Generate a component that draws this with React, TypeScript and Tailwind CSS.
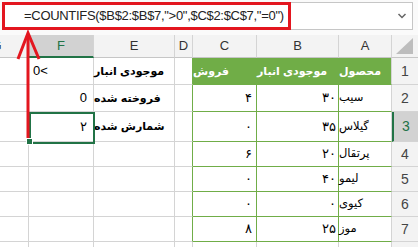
import React from "react";

type Cell = { text?: string; align?: "l" | "r"; bold?: boolean; fa?: boolean };

const cols = [
  { key: "G", w: "w-[64px] -ml-[35px]" },
  { key: "F", w: "w-[65px]" },
  { key: "E", w: "w-[81px]" },
  { key: "D", w: "w-[18px]" },
  { key: "C", w: "w-[64px]" },
  { key: "B", w: "w-[82px]" },
  { key: "A", w: "w-[53px]" },
];

const rowH = ["h-[27px]", "h-[27px]", "h-[30px]", "h-[25px]", "h-[25px]", "h-[25px]", "h-[25px]", "h-[25px]"];

// left-to-right order: G F E D C B A
const rows: Cell[][] = [
  [{}, { text: "0<", align: "l" }, { text: "موجودی انبار", bold: true, fa: true }, {}, { text: "فروش", bold: true, fa: true }, { text: "موجودی انبار", bold: true, fa: true }, { text: "محصول", bold: true, fa: true }],
  [{}, { text: "0" }, { text: "فروخته شده", bold: true, fa: true }, {}, { text: "۴" }, { text: "۳۰" }, { text: "سیب", fa: true }],
  [{}, { text: "۲" }, { text: "شمارش شده", bold: true, fa: true }, {}, { text: "۰" }, { text: "۳۵" }, { text: "گیلاس", fa: true }],
  [{}, {}, {}, {}, { text: "۶" }, { text: "۲۰" }, { text: "پرتقال", fa: true }],
  [{}, {}, {}, {}, { text: "۰" }, { text: "۴۰" }, { text: "لیمو", fa: true }],
  [{}, {}, {}, {}, { text: "۰" }, { text: "۰" }, { text: "کیوی", fa: true }],
  [{}, {}, {}, {}, { text: "۸" }, { text: "۲۵" }, { text: "موز", fa: true }],
  [{}, {}, {}, {}, {}, {}, {}],
];

const padR: Record<string, string> = { F: "pr-[6px]", E: "pr-[3px]", C: "pr-[4px]", B: "pr-[2px]", A: "pr-[1px]", G: "", D: "" };

function Row({ cells, idx }: { cells: Cell[]; idx: number }) {
  const inTable = idx < 7;
  return (
    <div className={`flex ${rowH[idx]}`}>
      {cols.map((c, ci) => {
        const cell = cells[ci];
        const tableCol = inTable && (c.key === "C" || c.key === "B" || c.key === "A");
        const greenRight = inTable && (c.key === "D" || c.key === "C" || c.key === "B");
        const fill = idx === 0 && tableCol ? "bg-[#70ad47] text-white" : "bg-white text-black";
        const rb = greenRight ? "border-r-[#70ad47]" : "border-r-[#d4d4d4]";
        const bb = tableCol ? "border-b-[#70ad47]" : "border-b-[#d4d4d4]";
        const al = cell.align === "l" ? "justify-start pl-[4px]" : `justify-end ${padR[c.key]}`;
        const size = cell.fa ? (cell.bold ? "text-[11px]" : "text-[11.5px]") : "text-[13px]";
        return (
          <div
            key={c.key}
            dir={cell.fa ? "rtl" : undefined}
            className={`${c.w} shrink-0 h-full border-r border-b ${rb} ${bb} ${fill} flex items-center ${al} ${size} whitespace-nowrap ${cell.bold ? "font-bold" : ""}`}
          >
            {cell.text}
          </div>
        );
      })}
      <div
        className={`flex-1 h-full border-b border-b-[#d4d4d4] flex items-center justify-center text-[14px] ${
          idx === 2 ? "bg-[#d2d2d2] text-[#217346] border-l-2 border-l-[#217346]" : "bg-[#f3f3f3] text-[#444]"
        }`}
      >
        {idx + 1}
      </div>
    </div>
  );
}

export default function App() {
  return (
    <div className="relative w-[418px] h-[247px] overflow-hidden bg-white font-['Liberation_Sans','DejaVu_Sans',sans-serif]">
      {/* formula bar */}
      <div className="h-[35px] pt-[2px] pl-[2px] bg-[#fafafa]">
        <div className="w-[411px] h-[28px] bg-white border border-[#c6c6c6] flex items-center">
          <div className="w-[289px] h-[28px] -ml-px border-[3px] border-[#e3161f] flex items-center pl-[19px] text-[13px] tracking-[-0.3px] text-[#222] whitespace-nowrap">
            =COUNTIFS($B$2:$B$7,"&gt;0",$C$2:$C$7,"=0")
          </div>
          <div className="flex-1" />
          <svg width="10" height="8" viewBox="0 0 10 8" className="mr-[5px]">
            <path d="M1.5 2 L5 5.5 L8.5 2" fill="none" stroke="#666" strokeWidth="1.5" />
          </svg>
        </div>
      </div>

      {/* column headers */}
      <div className="flex h-[23px] bg-[#f3f3f3] text-[13px]">
        {cols.map((c) => (
          <div
            key={c.key}
            className={`${c.w} shrink-0 h-full border-r border-r-[#d4d4d4] flex items-center justify-center ${
              c.key === "F" ? "bg-[#d2d2d2] text-[#217346] border-b-2 border-b-[#217346]" : "border-b border-b-[#c6c6c6] text-[#333]"
            }`}
          >
            {c.key}
          </div>
        ))}
        <div className="flex-1 h-full border-b border-b-[#c6c6c6] flex items-end justify-end pr-[5px] pb-[3px]">
          <svg width="17" height="16" viewBox="0 0 17 16">
            <polygon points="17,0 17,16 0,16" fill="#bdbdbd" />
          </svg>
        </div>
      </div>

      {rows.map((r, i) => (
        <Row key={i} cells={r} idx={i} />
      ))}

      {/* selection on F3 */}
      <div className="absolute left-[29px] top-[112px] w-[66px] h-[32px] border-2 border-[#217346]" />
      <div className="absolute left-[26px] top-[138px] w-[7px] h-[7px] bg-[#217346] border border-white" />

      {/* annotation arrow */}
      <svg className="absolute left-0 top-0" width="60" height="150" viewBox="0 0 60 150">
        <line x1="28" y1="34" x2="28" y2="138" stroke="#e3161f" strokeWidth="3" />
        <polyline points="18,59 28,33 39,59" fill="none" stroke="#e3161f" strokeWidth="3" strokeLinejoin="miter" />
      </svg>
    </div>
  );
}
